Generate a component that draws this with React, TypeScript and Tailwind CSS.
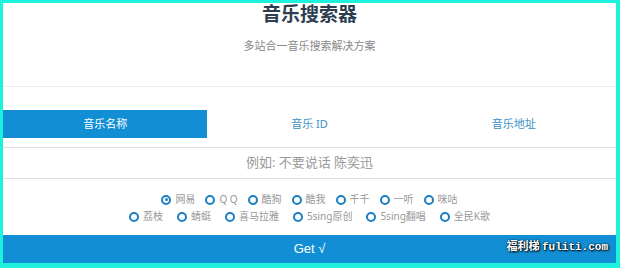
const sources1 = ["网易", "Q Q", "酷狗", "酷我", "千千", "一听", "咪咕"];
const sources2 = ["荔枝", "蜻蜓", "喜马拉雅", "5sing原创", "5sing翻唱", "全民K歌"];

function Radio({ label, checked }: { label: string; checked?: boolean }) {
  return (
    <label className="flex items-center gap-[4px]">
      <span className="w-[10px] h-[10px] rounded-full border-2 border-[#1b7fc2] flex items-center justify-center">
        {checked && <span className="w-[3px] h-[3px] rounded-full bg-[#1b7fc2]" />}
      </span>
      <span className="text-[10px] leading-[15px] text-[#999]">{label}</span>
    </label>
  );
}

export default function App() {
  const font = { fontFamily: '"Noto Sans", "Noto Sans CJK SC", sans-serif' };
  return (
    <div
      className="h-[268px] w-[620px] bg-white border-[#1cf2dc] border-l-[3px] border-t-[3px] border-r-[4px] border-b-[5px] flex flex-col overflow-hidden"
      style={font}
    >
      <div className="h-[84px] border-b border-[#eee] flex flex-col items-center">
        <h1 className="text-[19px] font-bold text-[#2c3e50] leading-none mt-[2px]">音乐搜索器</h1>
        <p className="text-[11px] text-[#888] mt-[14px]">多站合一音乐搜索解决方案</p>
      </div>

      <div className="mt-[23px] grid grid-cols-3 h-[28px] text-[11px]">
        <div className="bg-[#128fd4] text-white flex items-center justify-center">音乐名称</div>
        <div className="text-[#3a8fc2] flex items-center justify-center">音乐 ID</div>
        <div className="text-[#3a8fc2] flex items-center justify-center">音乐地址</div>
      </div>

      <div className="mt-[9px] border-t border-b border-[#ddd] h-[32px] flex items-center justify-center text-[13px] text-[#999]">
        例如: 不要说话 陈奕迅
      </div>

      <div className="flex flex-col items-center gap-[2px] mt-[13px]">
        <div className="flex gap-[10px]">
          {sources1.map((s, i) => (
            <Radio key={s} label={s} checked={i === 0} />
          ))}
        </div>
        <div className="flex gap-[14px]">
          {sources2.map((s) => (
            <Radio key={s} label={s} />
          ))}
        </div>
      </div>

      <div
        className="relative mt-auto h-[28px] bg-[#128fd4] flex items-center justify-center text-white text-[13px]"
        style={{ fontFamily: '"Liberation Sans", sans-serif' }}
      >
        Get √
        <span
          className="absolute right-[8px] top-[2px] text-[11px] text-white font-bold"
          style={{ fontFamily: '"Noto Sans CJK SC", sans-serif', textShadow: "0 0 2px #000, 1px 1px 2px #000" }}
        >
          福利梯 <span style={{ fontFamily: '"Liberation Mono", monospace' }}>fuliti.com</span>
        </span>
      </div>
    </div>
  );
}
